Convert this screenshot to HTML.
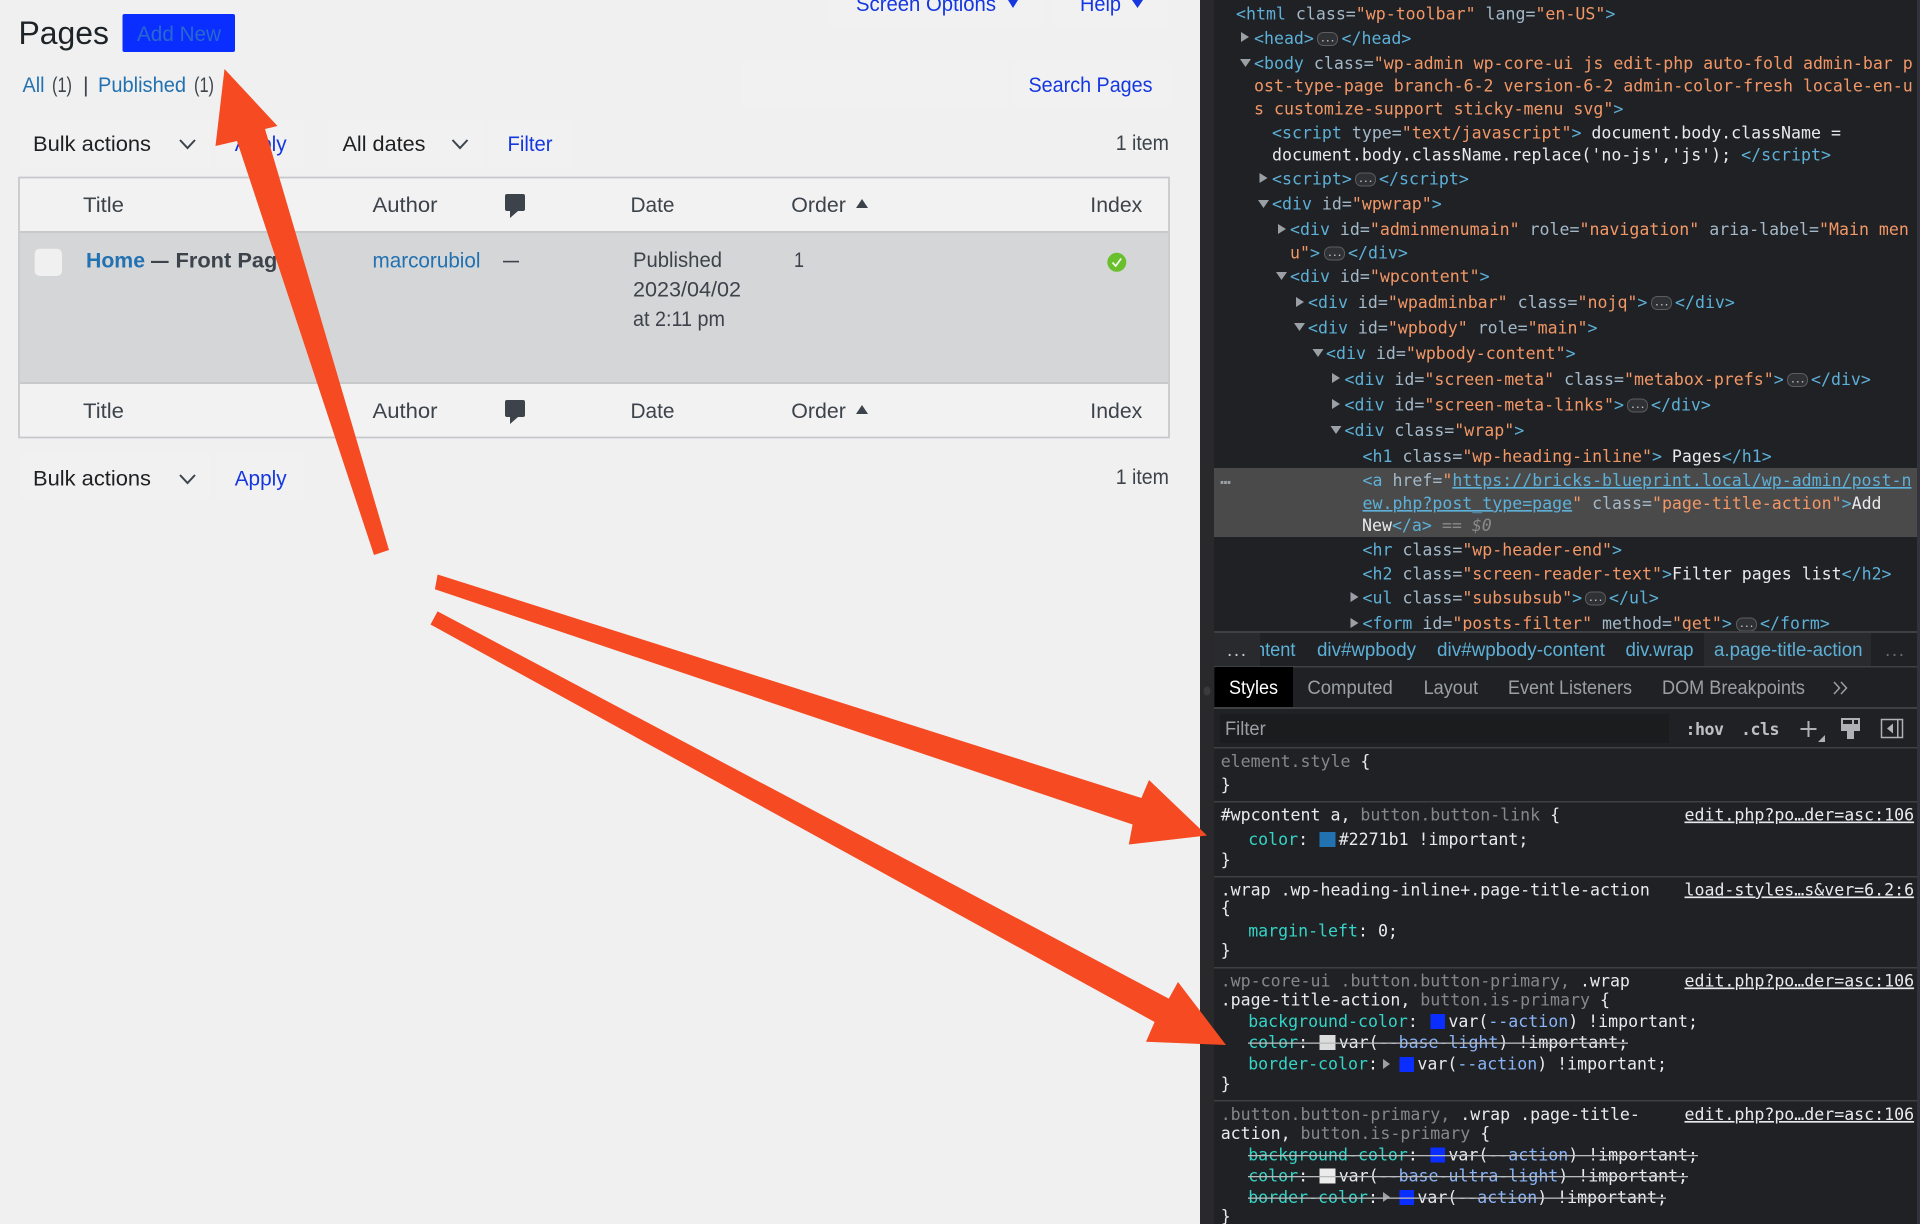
<!DOCTYPE html>
<html lang="en"><head><meta charset="utf-8"><title>Pages</title>
<style>
html,body{margin:0;padding:0;width:1920px;height:1224px;overflow:hidden;background:#f0f0f1}
svg{display:block}
text{white-space:pre}
.s{font-family:"Liberation Sans",sans-serif;font-size:21.5px;fill:#3c434a}
.d{fill:#1d1f21}.l{fill:#2271b1}.k{fill:#1537e0}.bd{font-weight:700}
.m{font-family:"DejaVu Sans Mono",monospace;font-size:16.58px;fill:#e8eaed}
.t{fill:#5db0d7}.a{fill:#a3b8c8}.o{fill:#f29766}.p{fill:#35d4c7}.g{fill:#85888b}.v{fill:#8ab4f8}
.u{text-decoration:underline}
.n{font-family:"Liberation Sans",sans-serif;font-size:19px;fill:#9aa0a6}
.c{fill:#5db0d7}
.tr{fill:#9aa0a6}
.bg{fill:#303134;stroke:#5c5d5f;stroke-width:1}
.ell{fill:#c5c7ca;font-size:8px;font-weight:700}
.sep{fill:#3f4042}
.box{fill:#f1f1f2}
</style></head>
<body>
<svg width="1920" height="1224" viewBox="0 0 1920 1224" xmlns="http://www.w3.org/2000/svg">
<rect width="1920" height="1224" fill="#f0f0f1"/>

<!-- top links -->
<rect class="box" x="828" y="0" width="215" height="27"/>
<rect class="box" x="1053" y="0" width="115" height="27"/>
<text class="s k" x="856" y="11" textLength="140" lengthAdjust="spacingAndGlyphs">Screen Options</text>
<path class="k" d="M1008 0h10l-5 8z"/>
<text class="s k" x="1080" y="11" textLength="41" lengthAdjust="spacingAndGlyphs">Help</text>
<path class="k" d="M1132 0h11l-5.500 8z"/>

<!-- heading -->
<text class="s" style="font-size:32px;fill:#1d2327" x="18.500" y="44" textLength="90.500" lengthAdjust="spacingAndGlyphs">Pages</text>
<rect x="122.500" y="14" width="112.500" height="38" rx="2" fill="#0a2eff"/>
<text class="s" style="fill:#2a68cc" x="137" y="41" textLength="84" lengthAdjust="spacingAndGlyphs">Add New</text>

<!-- subsubsub -->
<text class="s l" x="22.500" y="92" textLength="22" lengthAdjust="spacingAndGlyphs">All</text>
<text class="s" x="52" y="92" textLength="20" lengthAdjust="spacingAndGlyphs">(1)</text>
<text class="s" x="83" y="92">|</text>
<text class="s l" x="98" y="92" textLength="88" lengthAdjust="spacingAndGlyphs">Published</text>
<text class="s" x="194" y="92" textLength="20" lengthAdjust="spacingAndGlyphs">(1)</text>

<!-- search -->
<rect class="box" x="742" y="60" width="266" height="47"/>
<rect class="box" x="1012" y="62" width="160" height="45"/>
<text class="s k" x="1028.500" y="92" textLength="124" lengthAdjust="spacingAndGlyphs">Search Pages</text>

<!-- top toolbar -->
<rect class="box" x="21" y="120" width="189" height="48"/>
<rect class="box" x="216" y="120" width="88" height="48"/>
<rect class="box" x="328.500" y="120" width="155" height="48"/>
<rect class="box" x="488" y="120" width="85" height="48"/>
<text class="s d" x="33" y="151" textLength="118" lengthAdjust="spacingAndGlyphs">Bulk actions</text>
<path d="M180 140l7.500 8 7.500-8" fill="none" stroke="#3c434a" stroke-width="2"/>
<text class="s k" x="234.700" y="151" textLength="52" lengthAdjust="spacingAndGlyphs">Apply</text>
<text class="s d" x="342.500" y="151" textLength="83" lengthAdjust="spacingAndGlyphs">All dates</text>
<path d="M452.500 140l7.500 8 7.500-8" fill="none" stroke="#3c434a" stroke-width="2"/>
<text class="s k" x="507.500" y="151" textLength="45" lengthAdjust="spacingAndGlyphs">Filter</text>
<text class="s" x="1115.700" y="150" textLength="53.300" lengthAdjust="spacingAndGlyphs">1 item</text>

<!-- table -->
<rect x="19" y="177.500" width="1150" height="260" fill="#f2f2f3" stroke="#c6c7ca" stroke-width="1.700"/>
<rect x="20" y="232" width="1148" height="151" fill="#d5d6d8"/>
<rect x="20" y="231" width="1148" height="2" fill="#c8c9cb"/>
<rect x="20" y="382" width="1148" height="2" fill="#c8c9cb"/>

<text class="s" x="83" y="212" textLength="41" lengthAdjust="spacingAndGlyphs">Title</text>
<text class="s" x="372.500" y="212" textLength="65" lengthAdjust="spacingAndGlyphs">Author</text>
<path fill="#3c434a" d="M507 194h16a2 2 0 0 1 2 2v13a2 2 0 0 1-2 2h-5l-8 7v-7h-3a2 2 0 0 1-2-2v-13a2 2 0 0 1 2-2z"/>
<text class="s" x="630.500" y="212" textLength="44" lengthAdjust="spacingAndGlyphs">Date</text>
<text class="s" x="791.300" y="212" textLength="54.600" lengthAdjust="spacingAndGlyphs">Order</text>
<path fill="#3c434a" d="M862 199l6 9h-12z"/>
<text class="s" x="1090.300" y="212" textLength="52" lengthAdjust="spacingAndGlyphs">Index</text>

<rect x="34.700" y="248.700" width="27.300" height="27.300" rx="5" fill="#f0f0f1"/>
<text class="s l bd" x="86" y="267.500" textLength="59" lengthAdjust="spacingAndGlyphs">Home</text>
<text class="s bd" x="151" y="267.500" textLength="17.600" lengthAdjust="spacingAndGlyphs">—</text>
<text class="s bd" x="175.500" y="267.500" textLength="114" lengthAdjust="spacingAndGlyphs">Front Page</text>
<text class="s l" x="372.500" y="267.500" textLength="108" lengthAdjust="spacingAndGlyphs">marcorubiol</text>
<rect x="503" y="260.800" width="16" height="1.600" fill="#3c434a"/>
<text class="s" x="633" y="267" textLength="89" lengthAdjust="spacingAndGlyphs">Published</text>
<text class="s" x="633" y="296.500" textLength="108" lengthAdjust="spacingAndGlyphs">2023/04/02</text>
<text class="s" x="633" y="326" textLength="92" lengthAdjust="spacingAndGlyphs">at 2:11 pm</text>
<text class="s" x="794" y="267" textLength="10" lengthAdjust="spacingAndGlyphs">1</text>
<circle cx="1116.800" cy="262.300" r="9.500" fill="#6ac02c"/>
<path d="M1112.500 262.500l3.200 3.500 5.500-7.500" fill="none" stroke="#f2f7ee" stroke-width="1.800"/>

<text class="s" x="83" y="418" textLength="41" lengthAdjust="spacingAndGlyphs">Title</text>
<text class="s" x="372.500" y="418" textLength="65" lengthAdjust="spacingAndGlyphs">Author</text>
<path fill="#3c434a" d="M507 400h16a2 2 0 0 1 2 2v13a2 2 0 0 1-2 2h-5l-8 7v-7h-3a2 2 0 0 1-2-2v-13a2 2 0 0 1 2-2z"/>
<text class="s" x="630.500" y="418" textLength="44" lengthAdjust="spacingAndGlyphs">Date</text>
<text class="s" x="791.300" y="418" textLength="54.600" lengthAdjust="spacingAndGlyphs">Order</text>
<path fill="#3c434a" d="M862 405l6 9h-12z"/>
<text class="s" x="1090.300" y="418" textLength="52" lengthAdjust="spacingAndGlyphs">Index</text>

<!-- bottom toolbar -->
<rect class="box" x="21" y="452" width="189" height="48"/>
<rect class="box" x="216" y="452" width="88" height="48"/>
<text class="s d" x="33" y="485.500" textLength="118" lengthAdjust="spacingAndGlyphs">Bulk actions</text>
<path d="M180 475l7.500 8 7.500-8" fill="none" stroke="#3c434a" stroke-width="2"/>
<text class="s k" x="234.700" y="485.500" textLength="52" lengthAdjust="spacingAndGlyphs">Apply</text>
<text class="s" x="1115.700" y="484" textLength="53.300" lengthAdjust="spacingAndGlyphs">1 item</text>

<!-- devtools -->
<rect x="1200" y="0" width="720" height="1224" fill="#202124"/>
<rect x="1200" y="0" width="14" height="1224" fill="#29292b"/>
<ellipse cx="1207" cy="691" rx="3.500" ry="4.500" fill="#3a3a3c"/>
<rect x="1917" y="0" width="3" height="1224" fill="#33323d"/>
<rect x="1214" y="468" width="703" height="69" fill="#4a4a4b"/>
<text class="m" style="fill:#9aa0a6;font-weight:700" x="1217" y="484" textLength="17">...</text>

<text class="m" x="1236" y="19.500"><tspan class="t">&lt;html </tspan><tspan class="a">class=</tspan><tspan class="o">"wp-toolbar"</tspan><tspan class="a"> lang=</tspan><tspan class="o">"en-US"</tspan><tspan class="t">&gt;</tspan></text>
<path class="tr" d="M1241 32l8 5-8 5z"/>
<text class="m t" x="1254" y="44">&lt;head&gt;</text>
<rect class="bg" x="1317.500" y="32.500" width="20" height="13" rx="6"/><text class="m ell" x="1320.500" y="41.500">...</text>
<text class="m t" x="1341.500" y="44">&lt;/head&gt;</text>
<path class="tr" d="M1240 59h11l-5.500 8z"/>
<text class="m" x="1254" y="69"><tspan class="t">&lt;body </tspan><tspan class="a">class=</tspan><tspan class="o">"wp-admin wp-core-ui js edit-php auto-fold admin-bar p</tspan></text>
<text class="m o" x="1254" y="91.500">ost-type-page branch-6-2 version-6-2 admin-color-fresh locale-en-u</text>
<text class="m" x="1254" y="114.500"><tspan class="o">s customize-support sticky-menu svg"</tspan><tspan class="t">&gt;</tspan></text>
<text class="m" x="1272" y="138.500"><tspan class="t">&lt;script </tspan><tspan class="a">type=</tspan><tspan class="o">"text/javascript"</tspan><tspan class="t">&gt;</tspan> document.body.className =</text>
<text class="m" x="1272" y="160.500">document.body.className.replace('no-js','js'); <tspan class="t">&lt;/script&gt;</tspan></text>
<path class="tr" d="M1259.500 173l8 5-8 5z"/>
<text class="m t" x="1272" y="184.500">&lt;script&gt;</text>
<rect class="bg" x="1355.500" y="173" width="20" height="13" rx="6"/><text class="m ell" x="1358.500" y="182">...</text>
<text class="m t" x="1379" y="184.500">&lt;/script&gt;</text>
<path class="tr" d="M1258 200h11l-5.500 8z"/>
<text class="m" x="1272" y="209.500"><tspan class="t">&lt;div </tspan><tspan class="a">id=</tspan><tspan class="o">"wpwrap"</tspan><tspan class="t">&gt;</tspan></text>
<path class="tr" d="M1278 224l8 5-8 5z"/>
<text class="m" x="1290" y="235"><tspan class="t">&lt;div </tspan><tspan class="a">id=</tspan><tspan class="o">"adminmenumain"</tspan><tspan class="a"> role=</tspan><tspan class="o">"navigation"</tspan><tspan class="a"> aria-label=</tspan><tspan class="o">"Main men</tspan></text>
<text class="m" x="1290" y="258.500"><tspan class="o">u"</tspan><tspan class="t">&gt;</tspan></text>
<rect class="bg" x="1324.500" y="247" width="20" height="13" rx="6"/><text class="m ell" x="1327.500" y="256">...</text>
<text class="m t" x="1348" y="258.500">&lt;/div&gt;</text>
<path class="tr" d="M1276 272h11l-5.500 8z"/>
<text class="m" x="1290" y="282"><tspan class="t">&lt;div </tspan><tspan class="a">id=</tspan><tspan class="o">"wpcontent"</tspan><tspan class="t">&gt;</tspan></text>
<path class="tr" d="M1296 297l8 5-8 5z"/>
<text class="m" x="1308" y="308"><tspan class="t">&lt;div </tspan><tspan class="a">id=</tspan><tspan class="o">"wpadminbar"</tspan><tspan class="a"> class=</tspan><tspan class="o">"nojq"</tspan><tspan class="t">&gt;</tspan></text>
<rect class="bg" x="1651.500" y="296.500" width="20" height="13" rx="6"/><text class="m ell" x="1654.500" y="305.500">...</text>
<text class="m t" x="1675" y="308">&lt;/div&gt;</text>
<path class="tr" d="M1294 323h11l-5.500 8z"/>
<text class="m" x="1308" y="333.500"><tspan class="t">&lt;div </tspan><tspan class="a">id=</tspan><tspan class="o">"wpbody"</tspan><tspan class="a"> role=</tspan><tspan class="o">"main"</tspan><tspan class="t">&gt;</tspan></text>
<path class="tr" d="M1312.500 349h11l-5.500 8z"/>
<text class="m" x="1326" y="359"><tspan class="t">&lt;div </tspan><tspan class="a">id=</tspan><tspan class="o">"wpbody-content"</tspan><tspan class="t">&gt;</tspan></text>
<path class="tr" d="M1332 373l8 5-8 5z"/>
<text class="m" x="1344.500" y="385"><tspan class="t">&lt;div </tspan><tspan class="a">id=</tspan><tspan class="o">"screen-meta"</tspan><tspan class="a"> class=</tspan><tspan class="o">"metabox-prefs"</tspan><tspan class="t">&gt;</tspan></text>
<rect class="bg" x="1787.500" y="373.500" width="20" height="13" rx="6"/><text class="m ell" x="1790.500" y="382.500">...</text>
<text class="m t" x="1811" y="385">&lt;/div&gt;</text>
<path class="tr" d="M1332 399l8 5-8 5z"/>
<text class="m" x="1344.500" y="410.500"><tspan class="t">&lt;div </tspan><tspan class="a">id=</tspan><tspan class="o">"screen-meta-links"</tspan><tspan class="t">&gt;</tspan></text>
<rect class="bg" x="1627.500" y="399" width="20" height="13" rx="6"/><text class="m ell" x="1630.500" y="408">...</text>
<text class="m t" x="1651" y="410.500">&lt;/div&gt;</text>
<path class="tr" d="M1330.500 426h11l-5.500 8z"/>
<text class="m" x="1344.500" y="436"><tspan class="t">&lt;div </tspan><tspan class="a">class=</tspan><tspan class="o">"wrap"</tspan><tspan class="t">&gt;</tspan></text>
<text class="m" x="1362.500" y="462"><tspan class="t">&lt;h1 </tspan><tspan class="a">class=</tspan><tspan class="o">"wp-heading-inline"</tspan><tspan class="t">&gt;</tspan> Pages<tspan class="t">&lt;/h1&gt;</tspan></text>
<text class="m" x="1362.500" y="486"><tspan class="t">&lt;a </tspan><tspan class="a">href=</tspan><tspan class="o">"</tspan><tspan class="t u">https://bricks-blueprint.local/wp-admin/post-n</tspan></text>
<text class="m" x="1362.500" y="509"><tspan class="t u">ew.php?post_type=page</tspan><tspan class="o">"</tspan><tspan class="a"> class=</tspan><tspan class="o">"page-title-action"</tspan><tspan class="t">&gt;</tspan>Add</text>
<text class="m" x="1362" y="531">New<tspan class="t">&lt;/a&gt;</tspan><tspan fill="#8a8a8a"> == </tspan><tspan fill="#8a8a8a" font-style="italic">$0</tspan></text>
<text class="m" x="1362.500" y="555.500"><tspan class="t">&lt;hr </tspan><tspan class="a">class=</tspan><tspan class="o">"wp-header-end"</tspan><tspan class="t">&gt;</tspan></text>
<text class="m" x="1362.500" y="579.500"><tspan class="t">&lt;h2 </tspan><tspan class="a">class=</tspan><tspan class="o">"screen-reader-text"</tspan><tspan class="t">&gt;</tspan>Filter pages list<tspan class="t">&lt;/h2&gt;</tspan></text>
<path class="tr" d="M1350.500 592l8 5-8 5z"/>
<text class="m" x="1362.500" y="603.500"><tspan class="t">&lt;ul </tspan><tspan class="a">class=</tspan><tspan class="o">"subsubsub"</tspan><tspan class="t">&gt;</tspan></text>
<rect class="bg" x="1585.500" y="592" width="20" height="13" rx="6"/><text class="m ell" x="1588.500" y="601">...</text>
<text class="m t" x="1609" y="603.500">&lt;/ul&gt;</text>
<path class="tr" d="M1350.500 618l8 5-8 5z"/>
<text class="m" x="1362.500" y="629"><tspan class="t">&lt;form </tspan><tspan class="a">id=</tspan><tspan class="o">"posts-filter"</tspan><tspan class="a"> method=</tspan><tspan class="o">"get"</tspan><tspan class="t">&gt;</tspan></text>
<rect class="bg" x="1736.500" y="618" width="20" height="13" rx="6"/><text class="m ell" x="1739.500" y="627">...</text>
<text class="m t" x="1760" y="629">&lt;/form&gt;</text>

<!-- breadcrumbs -->
<rect x="1214" y="631" width="703" height="36" fill="#202124"/>
<rect x="1214" y="631" width="703" height="2" class="sep"/>
<rect x="1704" y="633" width="167" height="33" fill="#292a2d"/>
<text class="n c" x="1255" y="656" textLength="40.500" lengthAdjust="spacingAndGlyphs">ntent</text>
<rect x="1214" y="633" width="46" height="33" fill="#292a2d"/>
<rect x="1214" y="666" width="703" height="1.500" class="sep"/>
<text class="n" style="fill:#c7c9cc" x="1227" y="656" textLength="19">...</text>
<text class="n c" x="1317" y="656" textLength="99" lengthAdjust="spacingAndGlyphs">div#wpbody</text>
<text class="n c" x="1437" y="656" textLength="168" lengthAdjust="spacingAndGlyphs">div#wpbody-content</text>
<text class="n c" x="1625.500" y="656" textLength="68" lengthAdjust="spacingAndGlyphs">div.wrap</text>
<text class="n c" x="1714" y="656" textLength="148.500" lengthAdjust="spacingAndGlyphs">a.page-title-action</text>
<text class="n" style="fill:#6a6c6f" x="1885" y="656" textLength="19">...</text>

<!-- tabs -->
<rect x="1214.500" y="667" width="78.500" height="40" fill="#000"/>
<text class="n" style="fill:#fff" x="1229" y="694" textLength="49" lengthAdjust="spacingAndGlyphs">Styles</text>
<text class="n" x="1307.400" y="694" textLength="85.400" lengthAdjust="spacingAndGlyphs">Computed</text>
<text class="n" x="1423.600" y="694" textLength="54.400" lengthAdjust="spacingAndGlyphs">Layout</text>
<text class="n" x="1508" y="694" textLength="124" lengthAdjust="spacingAndGlyphs">Event Listeners</text>
<text class="n" x="1662" y="694" textLength="143" lengthAdjust="spacingAndGlyphs">DOM Breakpoints</text>
<path d="M1834 682l5.500 6-5.500 6M1841 682l5.500 6-5.500 6" fill="none" stroke="#9aa0a6" stroke-width="1.500"/>
<rect x="1214" y="707" width="703" height="2" class="sep"/>

<!-- filter -->
<rect x="1220" y="714" width="449" height="29" fill="#1b1c1e"/>
<text class="n" x="1225" y="735" textLength="40.700" lengthAdjust="spacingAndGlyphs">Filter</text>
<text class="m bd" style="fill:#bdc1c6" x="1685.500" y="735" textLength="38.500">:hov</text>
<text class="m bd" style="fill:#bdc1c6" x="1741" y="735" textLength="38.500">.cls</text>
<path d="M1808.500 721v16M1800.500 729h16" stroke="#aeb1b5" stroke-width="2"/>
<path d="M1825 735v7h-7z" fill="#aeb1b5"/>
<path d="M1841 718h19v13h-6v8h-7v-8h-6z" fill="#aeb1b5"/>
<rect x="1843" y="720" width="15" height="4" fill="#202124"/><rect x="1852" y="719" width="2" height="5" fill="#aeb1b5"/>
<rect x="1881.500" y="719.500" width="21" height="18" fill="none" stroke="#aeb1b5" stroke-width="1.500"/>
<rect x="1897" y="719.500" width="1.500" height="18" fill="#aeb1b5"/>
<path d="M1893 723.500v10l-6-5z" fill="#aeb1b5"/>
<rect x="1214" y="747" width="703" height="1.500" class="sep"/>

<!-- rules -->
<text class="m g" x="1220.700" y="767">element.style<tspan fill="#e8eaed"> {</tspan></text>
<text class="m" x="1220.700" y="790.500">}</text>
<rect x="1214" y="801" width="703" height="1.500" class="sep"/>

<text class="m" x="1220.700" y="820.500">#wpcontent a,<tspan class="g"> button.button-link</tspan> {</text>
<text class="m u" x="1684.500" y="820.500">edit.php?po…der=asc:106</text>
<text class="m" x="1248.200" y="845"><tspan class="p">color</tspan>:</text>
<rect x="1319.500" y="832" width="16" height="15" fill="#2271b1"/>
<text class="m" x="1338.700" y="845">#2271b1 !important;</text>
<text class="m" x="1220.700" y="865.500">}</text>
<rect x="1214" y="876" width="703" height="1.500" class="sep"/>

<text class="m" x="1220.700" y="895.500">.wrap .wp-heading-inline+.page-title-action</text>
<text class="m u" x="1684.500" y="895.500">load-styles…s&amp;ver=6.2:6</text>
<text class="m" x="1220.700" y="913.500">{</text>
<text class="m" x="1248.200" y="936.500"><tspan class="p">margin-left</tspan>: 0;</text>
<text class="m" x="1220.700" y="956">}</text>
<rect x="1214" y="967" width="703" height="1.500" class="sep"/>

<text class="m g" x="1220.700" y="986.500">.wp-core-ui .button.button-primary,<tspan fill="#e8eaed"> .wrap</tspan></text>
<text class="m u" x="1684.500" y="986.500">edit.php?po…der=asc:106</text>
<text class="m" x="1220.700" y="1005.500">.page-title-action,<tspan class="g"> button.is-primary</tspan> {</text>
<text class="m" x="1248.200" y="1027"><tspan class="p">background-color</tspan>:</text>
<rect x="1430.500" y="1014" width="14.500" height="15" fill="#0a2eff"/>
<text class="m" x="1448.400" y="1027">var(<tspan class="v">--action</tspan>) !important;</text>
<text class="m" x="1248.200" y="1048"><tspan class="p">color</tspan>:</text>
<rect x="1319.500" y="1035" width="16" height="15" fill="#dcdcdc"/>
<text class="m" x="1338.700" y="1048">var(<tspan class="v">--base-light</tspan>) !important;</text>
<rect x="1248" y="1042.500" width="380" height="1.300" fill="#b9babb"/>
<text class="m" x="1248.200" y="1069.500"><tspan class="p">border-color</tspan>:</text>
<path class="tr" d="M1383 1059l7 5-7 5z"/>
<rect x="1399.500" y="1057" width="14.500" height="15" fill="#0a2eff"/>
<text class="m" x="1417.400" y="1069.500">var(<tspan class="v">--action</tspan>) !important;</text>
<text class="m" x="1220.700" y="1089.500">}</text>
<rect x="1214" y="1100" width="703" height="1.500" class="sep"/>

<text class="m g" x="1220.700" y="1120">.button.button-primary,<tspan fill="#e8eaed"> .wrap .page-title-</tspan></text>
<text class="m u" x="1684.500" y="1120">edit.php?po…der=asc:106</text>
<text class="m" x="1220.700" y="1139">action,<tspan class="g"> button.is-primary</tspan> {</text>
<text class="m" x="1248.200" y="1160.500"><tspan class="p">background-color</tspan>:</text>
<rect x="1430.500" y="1147.500" width="14.500" height="15" fill="#0a2eff"/>
<text class="m" x="1448.400" y="1160.500">var(<tspan class="v">--action</tspan>) !important;</text>
<rect x="1248" y="1155" width="450" height="1.300" fill="#b9babb"/>
<text class="m" x="1248.200" y="1181.500"><tspan class="p">color</tspan>:</text>
<rect x="1319.500" y="1168.500" width="16" height="15" fill="#ececec"/>
<text class="m" x="1338.700" y="1181.500">var(<tspan class="v">--base-ultra-light</tspan>) !important;</text>
<rect x="1248" y="1176" width="440" height="1.300" fill="#b9babb"/>
<text class="m" x="1248.200" y="1203"><tspan class="p">border-color</tspan>:</text>
<path class="tr" d="M1383 1192l7 5-7 5z"/>
<rect x="1399.500" y="1190" width="14.500" height="15" fill="#0a2eff"/>
<text class="m" x="1417.400" y="1203">var(<tspan class="v">--action</tspan>) !important;</text>
<rect x="1248" y="1197.500" width="418" height="1.300" fill="#b9babb"/>
<text class="m" x="1220.700" y="1222">}</text>

<!-- arrows -->
<g fill="#f54a22">
<polygon points="224.500,69 277.500,126 265,129 389,550 374,555 237,141 215.500,146"/>
<polygon points="437.600,574.500 1141.400,798 1149,780 1207,835.500 1128.800,844.500 1132.600,824.500 434.900,589.300"/>
<polygon points="437.600,611.400 1168.800,998.600 1178,982 1226,1045 1146,1041.700 1154.600,1022 430.500,624.500"/>
</g>
</svg>
</body></html>
